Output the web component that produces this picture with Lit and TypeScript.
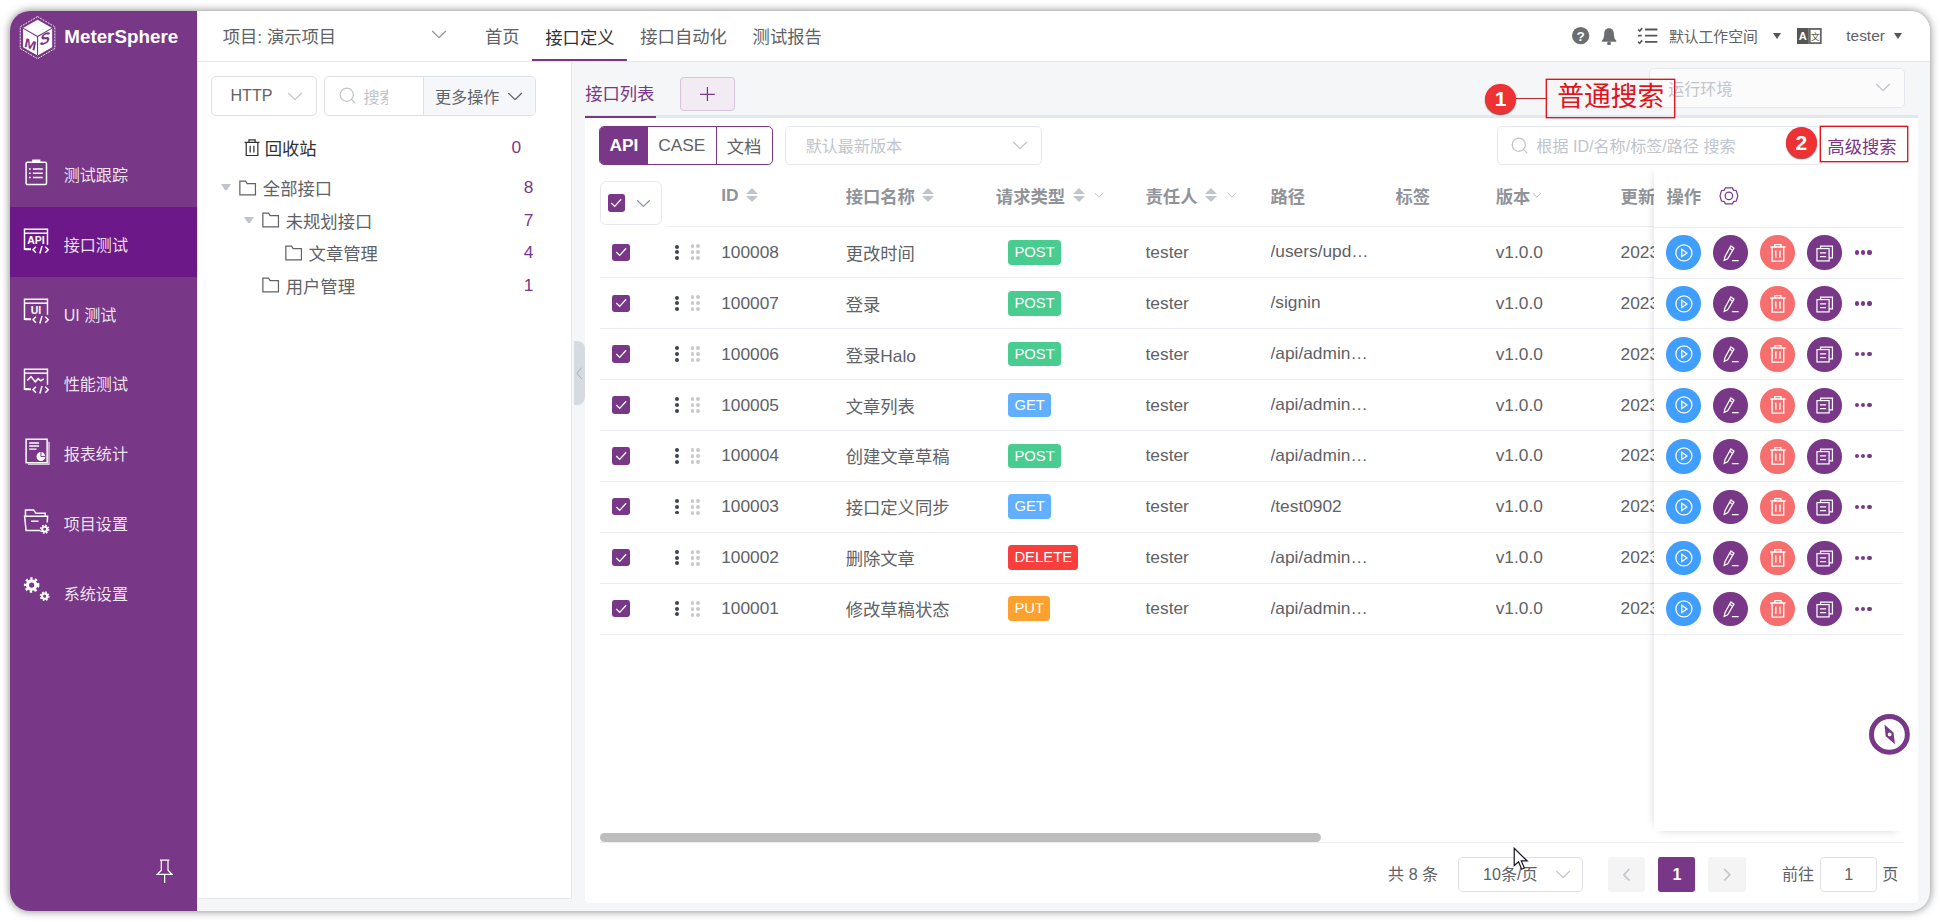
import { LitElement, html, css, svg } from "lit";
import { customElement } from "lit/decorators.js";

const chev = (c = "#c0c4cc", w = 13, h = 7) => html`<svg class="chev" width=${w} height=${h} viewBox="0 0 13 7"><path d="M1 .8l5.5 5.4L12 .8" fill="none" stroke=${c} stroke-width="1"/></svg>`;
const sideIcon = (inner: unknown) => html`<svg class="si" width="22" height="22" viewBox="0 0 22 22" fill="none" stroke="#fff" stroke-width="1.2">${inner}</svg>`;
const winBody = (label: string, x = 10.5) => svg`
  <path d="M5 17.2H1.2V1h18.6v12.5"/><path d="M1.2 4.2h18.6"/>
  <text x=${x} y="13" font-size="8.5" font-weight="700" text-anchor="middle" fill="#fff" stroke="none" font-family="Liberation Sans">${label}</text>
  <path d="M1.5 17.2h5" stroke-width="1.6"/>
  <path d="M10.5 15.2l-2.4 2.4 2.4 2.4M18 15.2l2.4 2.4-2.4 2.4M15.4 14.6l-1.8 6" stroke-width="1.2"/>`;
const gear = (cx: number, cy: number, r: number, w: number, tooth: number) => svg`<circle cx=${cx} cy=${cy} r=${r} stroke-width=${w} fill="none"/><circle cx=${cx} cy=${cy} r=${r + w * 0.7} stroke-width=${w * 0.8} stroke-dasharray="${tooth} ${tooth}" fill="none"/>`;

const NAV = [
  { t: "测试跟踪", i: sideIcon(svg`<rect x="2.5" y="2.6" width="16.5" height="18" rx="1"/><path d="M8 2.6V1h5.5v1.6z" fill="#fff"/><path d="M8 8h8M8 11.5h8M8 15h8"/><path d="M4.8 8h1.4M4.8 11.5h1.4M4.8 15h1.4"/>`) },
  { t: "接口测试", i: sideIcon(winBody("API")), a: true },
  { t: "UI 测试", i: sideIcon(winBody("UI")) },
  { t: "性能测试", i: sideIcon(svg`<path d="M5 17.2H1.2V1h18.6v12.5"/><path d="M1.2 4.2h18.6"/><path d="M3.5 10l3-3 3.4 4.2 2.4-2.6 2 1.8 2.5-1.6"/><path d="M1.5 17.2h5" stroke-width="1.6"/><path d="M10.5 15.2l-2.4 2.4 2.4 2.4M18 15.2l2.4 2.4-2.4 2.4M15.4 14.6l-1.8 6"/>`) },
  { t: "报表统计", i: sideIcon(svg`<rect x="2.5" y="1" width="17" height="19"/><path d="M4 21.3h17V3" stroke-opacity=".7"/><path d="M5 4h8M5 6.5h8M5 9h6"/><circle cx="14.5" cy="15" r="3.6" fill="#fff" stroke="none"/><path d="M14.5 15v-3.6M14.5 15h3.6" stroke="#783887" stroke-width=".8"/>`) },
  { t: "项目设置", i: sideIcon(svg`<path d="M14 19H2.5L1.3 7.5h18.6l-.3 5"/><path d="M2 7.5V2.4h6.5l2 2.6h7.5v2.5"/><path d="M6.5 11.5h6"/><circle cx="17.5" cy="18" r="2" stroke-width="1.6"/><circle cx="17.5" cy="18" r="3.3" stroke-width="1.1" stroke-dasharray="1.3 1.3"/>`) },
  { t: "系统设置", i: sideIcon(svg`${gear(7, 6.5, 3.4, 2.6, 1.9)}${gear(17.5, 15.5, 2.1, 1.7, 1.3)}`) },
];

const ROWS = [
  ["100008", "更改时间", "POST", "/users/updateTime"],
  ["100007", "登录", "POST", "/signin"],
  ["100006", "登录Halo", "POST", "/api/admin/login"],
  ["100005", "文章列表", "GET", "/api/admin/posts"],
  ["100004", "创建文章草稿", "POST", "/api/admin/posts"],
  ["100003", "接口定义同步", "GET", "/test0902"],
  ["100002", "删除文章", "DELETE", "/api/admin/posts/1"],
  ["100001", "修改草稿状态", "PUT", "/api/admin/posts/status"],
];

const TREE = [
  { t: "全部接口", n: 8, d: 0, open: true },
  { t: "未规划接口", n: 7, d: 1, open: true },
  { t: "文章管理", n: 4, d: 2 },
  { t: "用户管理", n: 1, d: 1 },
];

const TAG: Record<string, string> = { POST: "post", GET: "get", DELETE: "del", PUT: "put" };

const sort = html`<span class="sort"><i class="up"></i><i class="dn"></i></span>`;
const check = html`<span class="cb"><svg width="10" height="8" viewBox="0 0 10 8"><path d="M1 4l2.8 2.8L9 1" fill="none" stroke="#fff" stroke-width="1"/></svg></span>`;
const folder = html`<svg class="fd" width="14" height="13" viewBox="0 0 14 13"><path d="M.7 1h4.6l1.3 2h6.7v9H.7z" fill="none" stroke="#606266" stroke-width="1"/></svg>`;
const search = html`<svg width="14" height="14" viewBox="0 0 14 14"><circle cx="6.3" cy="6.3" r="5.3" fill="none" stroke="#c0c4cc" stroke-width="1"/><path d="M10.2 10.2l3 3" stroke="#c0c4cc" stroke-width="1"/></svg>`;

@customElement("app-root")
export class AppRoot extends LitElement {
  static styles = css`
    :host { display: block; }
    * { box-sizing: border-box; }
    .app { zoom: 1.2372; width: 1568px; height: 745px; padding: 9px 8px 0; overflow: hidden; background: #fff;
      font-family: "Liberation Sans", "Noto Sans CJK SC", sans-serif; font-size: 14px; color: #606266; }
    .win { position: relative; width: 1552px; height: 727px; border-radius: 16px; overflow: hidden; display: flex;
      background: #f5f6f7; box-shadow: 0 0 7px rgba(0,0,0,.5); }
    svg { display: block; flex: none; }

    .side { width: 151px; flex: none; background: #783887; display: flex; flex-direction: column; color: #fff; }
    .logo { height: 102px; padding: 4px 0 0 7.5px; display: flex; align-items: flex-start; gap: 6.5px; }
    .logo b { font-size: 15.2px; line-height: 34px; }
    .item { height: 56.4px; display: flex; align-items: center; padding-left: 11px; gap: 10.5px; font-size: 13px; color: rgba(255,255,255,.88); }
    .item.on { background: #6c1889; }
    .item span { padding-top: 3px; }
    .pin { margin: auto 19px 22px auto; }

    .right { flex: 1; min-width: 0; display: flex; flex-direction: column; }
    .top { height: 41px; flex: none; background: #fff; border-bottom: 1px solid #e6e6e6; display: flex; align-items: stretch; padding-left: 21px; }
    .proj { width: 201.6px; display: flex; align-items: center; justify-content: space-between; padding: 0 20px 0 0; }
    .proj .chev { margin-top: -2px; }
    .tab { padding: 0 10.4px; display: flex; align-items: center; }
    .tab.on { color: #303133; border-bottom: 2px solid #783887; padding-top: 2px; }
    .tools { margin-left: auto; padding-right: 23px; display: flex; align-items: center; font-size: 12px; }
    .caret { width: 0; height: 0; border: 4px solid transparent; border-top: 5px solid #555; border-bottom: 0; }
    .ml7 { margin-left: 7px; }
    .ml9 { margin-left: 9px; }
    .ml12 { margin-left: 12px; }
    .ml13 { margin-left: 13px; }
    .ml16 { margin-left: 16px; }
    .ml20 { margin-left: 20px; font-size: 12.5px; }

    .body { flex: 1; min-height: 0; display: flex; }
    .panel { width: 302px; margin: 0 0 9px 1px; flex: none; background: #fff; border-right: 1px solid #e4e7ed; border-bottom: 1px solid #e8e8e8; padding: 11.5px 0 0 10.5px; }
    .filters { display: flex; gap: 6px; }
    .sel { height: 32px; border: 1px solid #dcdfe6; border-radius: 4px; display: flex; align-items: center; justify-content: space-between; background: #fff; }
    .http { width: 85.5px; padding: 0 10px 0 15px; font-size: 13px; }
    .group { width: 171px; height: 32px; border: 1px solid #dcdfe6; border-radius: 4px; display: flex; overflow: hidden; }
    .group .q { width: 79px; display: flex; align-items: center; padding-left: 11px; gap: 6px; color: #c0c4cc; font-size: 13px; overflow: hidden; white-space: nowrap; }
    .group .q em { font-style: normal; width: 20px; overflow: hidden; display: block; }
    .group .more { flex: 1; background: #f5f7fa; border-left: 1px solid #dcdfe6; display: flex; align-items: center; padding-left: 9px; gap: 6px; font-size: 13px; }
    .bin { margin-top: 12px; height: 28px; display: flex; align-items: center; padding-left: 26.5px; gap: 4px; color: #303133; }
    .bin i, .node i { font-style: normal; color: #783887; margin-left: auto; }
    .bin i { margin-right: 40px; }
    .tree { margin-top: 5px; }
    .node { height: 26.3px; display: flex; align-items: center; position: relative; }
    .node i { margin-right: 30px; }
    .tri { width: 8px; height: 5px; flex: none; margin-right: 6.5px; border-style: solid; border-width: 5px 4px 0; border-color: #c0c4cc transparent transparent; }
    .tri.none { border-color: transparent; }
    .node .fd { margin-right: 5px; }

    .gut { width: 11px; flex: none; display: flex; padding: 226px 0 0 2px; }
    .gut div { width: 8.5px; height: 51px; background: #d5dbe0; border-radius: 0 6px 6px 0; display: flex; align-items: center; justify-content: center; }

    .main { flex: 1; min-width: 0; display: flex; flex-direction: column; padding-right: 10px; padding-bottom: 6px; }
    .tabs { height: 45px; flex: none; display: flex; position: relative; }
    .tabs::after { content: ""; position: absolute; left: 0; right: 0; bottom: 0; height: 2px; background: #e4e7ed; }
    .lt { width: 57px; height: 45px; color: #783887; border-bottom: 2px solid #783887; display: flex; align-items: center; padding-top: 6px; position: relative; z-index: 1; }
    .add { width: 44px; height: 27px; margin: 12.5px 0 0 20px; background: #f2ebf3; border: 1px solid #d7c3db; border-radius: 3px; display: flex; align-items: center; justify-content: center; }
    .env { width: 206.5px; height: 32px; margin: 5px 10.5px 0 auto; padding: 0 10px 0 14.5px; color: #c0c4cc; font-size: 13px; border-color: #e4e7ed; background: #fbfbfc; }

    .card { flex: 1; min-height: 0; background: #fff; border-radius: 3px; position: relative; display: flex; flex-direction: column; }
    .bar { display: flex; align-items: center; height: 32px; margin: 6.5px 12px 0 11px; flex: none; }
    .sw { display: flex; height: 32px; width: 140.5px; border: 1px solid #783887; border-radius: 4px; overflow: hidden; }
    .sw span { display: flex; align-items: center; justify-content: center; }
    .sw .a { width: 39px; background: #783887; color: #fff; font-weight: 700; }
    .sw .b { width: 55.5px; border-right: 1px solid #783887; }
    .sw .c { flex: 1; }
    .ver { width: 208px; margin-left: 10px; padding: 0 11px 0 16px; color: #c0c4cc; font-size: 13px; border-color: #e4e7ed; }
    .find { margin-left: auto; width: 262px; height: 32px; border: 1px solid #e4e7ed; border-radius: 4px; display: flex; align-items: center; gap: 6.5px; padding-left: 10.5px; color: #c0c4cc; font-size: 13px; white-space: nowrap; }
    .adv { margin-left: 5px; width: 61px; color: #783887; }

    .table { margin: 9px 12px 0; flex: 1; min-height: 0; overflow: hidden; }
    .rw { display: grid; grid-template-columns: 54px 44px 100.6px 121.4px 121px 101px 101px 81px 101px 228px; height: 41.15px; }
    .rw > div { display: flex; align-items: center; border-bottom: 1px solid #ebeef5; white-space: nowrap; overflow: hidden; }
    .head { height: 41.3px; color: #909399; font-weight: 700; }
    .head > div { padding-bottom: 10px; }
    .head > div:first-child { border-bottom: 0; padding: 2px 0 0; overflow: visible; }
    .all { width: 50px; height: 35px; border: 1px solid #e4e7ed; border-radius: 5px; display: flex; align-items: center; padding-left: 5.5px; gap: 9px; }
    .cb { width: 14px; height: 14px; border-radius: 2px; background: #783887; display: flex; align-items: center; justify-content: center; flex: none; }
    .rw .c0 { padding-left: 10px; }
    .sort { display: inline-flex; flex-direction: column; gap: 2px; margin-left: 6px; }
    .sort i { display: block; width: 0; height: 0; border-left: 5px solid transparent; border-right: 5px solid transparent; }
    .sort .up { border-bottom: 5.5px solid #c0c4cc; }
    .sort .dn { border-top: 5.5px solid #c0c4cc; }
    .flt { margin-left: 8px; }
    .flv { margin-left: 1px; }
    .drag { display: flex; align-items: center; padding-left: 6.5px; gap: 9.5px; }
    .vd { width: 3.2px; display: flex; flex-direction: column; gap: 1.4px; }
    .vd b { width: 3.2px; height: 3.2px; border-radius: 50%; background: #3d4450; display: block; }
    .gr { display: grid; grid-template-columns: 3.2px 3.2px; gap: 1.6px 1.2px; }
    .gr b { width: 3.2px; height: 3.2px; border-radius: 50%; background: #c9c9c9; display: block; }
    .t { margin-left: 10px; height: 20px; padding: 0 5px; line-height: 20px; font-size: 12px; color: #fff; border-radius: 3px; }
    .post { background: #49cc90; }
    .get { background: #61affe; }
    .del { background: #f93e3e; }
    .put { background: #fca130; }
    .path { display: block !important; line-height: 40px; }
    .path span { display: block; width: 81px; overflow: hidden; text-overflow: ellipsis; }

    .fixed { position: absolute; left: 864px; top: 40px; width: 201px; height: 537px; background: #fff; box-shadow: -5px 0 7px -5px rgba(0,0,0,.14), 0 5px 7px -5px rgba(0,0,0,.14); }
    .fh { height: 49px; padding: 0 0 0 10px; display: flex; align-items: center; gap: 14.5px; color: #909399; font-weight: 700; padding-bottom: 2px; border-bottom: 1px solid #ebeef5; }
    .fr { height: 41.15px; padding-left: 10px; display: flex; align-items: center; gap: 10px; border-bottom: 1px solid #ebeef5; }
    .ic { width: 28px; height: 28px; border-radius: 50%; display: flex; align-items: center; justify-content: center; flex: none; }
    .ic.b { background: #409eff; }
    .ic.p { background: #783887; }
    .ic.r { background: #f76e6e; }
    .mo { display: flex; gap: 1.6px; margin-left: .5px; }
    .mo b { width: 3.4px; height: 3.4px; background: #783887; border-radius: 50%; display: block; }

    .thumb { flex: none; height: 7.5px; width: 583px; margin-left: 12px; border-radius: 4px; background: #bdbdbd; }
    .pager { flex: none; height: 49.5px; margin: 0 12px; border-top: 1px solid #ebeef5; display: flex; align-items: flex-start; padding-top: 11.5px; font-size: 13px; line-height: 28px; }
    .pager .tot { margin-left: 637px; }
    .size { width: 101px; height: 28px; margin-left: 16px; padding: 0 9px 0 19.5px; border-color: #dcdfe6; font-size: 13px; }
    .pg { width: 30px; height: 28px; border-radius: 2px; background: #f4f4f5; display: flex; align-items: center; justify-content: center; margin-left: 10.5px; }
    .pg.first { margin-left: 20.5px; }
    .pg.cur { background: #783887; color: #fff; font-weight: 700; }
    .go { margin-left: 29.5px; }
    .num { width: 46px; height: 28px; margin: 0 4px 0 5px; border: 1px solid #dcdfe6; border-radius: 3px; text-align: center; line-height: 26px; }

    .note { position: absolute; border: 1px solid #e0141c; color: #e0141c; display: flex; align-items: center; justify-content: center; white-space: nowrap; background: transparent; }
    .n1 { left: 1242px; top: 55px; width: 104px; height: 31px; font-size: 21.6px; line-height: 1; padding-bottom: 2px; box-shadow: 0 0 0 .3px #e0141c; }
    .n2 { left: 1463px; top: 93px; width: 71px; height: 29px; box-shadow: 0 0 0 .3px #e0141c; }
    .bd { position: absolute; width: 25px; height: 25px; border-radius: 50%; background: #ee3233; color: #fff; font-size: 17px; font-weight: 700; display: flex; align-items: center; justify-content: center; box-shadow: 0 1px 1px rgba(90,0,0,.7); }
    .b1 { left: 1192.5px; top: 58.5px; }
    .b2 { left: 1435.5px; top: 94px; }
    .ln { position: absolute; left: 1217px; top: 70px; width: 25px; height: 1.4px; background: #b8262a; }
    .compass { position: absolute; left: 1503px; top: 568.5px; }
    .cursor { position: absolute; left: 1215px; top: 676px; }
  `;

  private row(r: string[]) {
    return html`<div class="rw">
      <div class="c0">${check}</div>
      <div class="drag"><span class="vd"><b></b><b></b><b></b></span><span class="gr"><b></b><b></b><b></b><b></b><b></b><b></b></span></div>
      <div>${r[0]}</div><div>${r[1]}</div>
      <div><span class="t ${TAG[r[2]]}">${r[2]}</span></div>
      <div>tester</div>
      <div class="path"><span>${r[3]}</span></div>
      <div></div><div>v1.0.0</div><div>2023-09-04 15:30:21</div>
    </div>`;
  }

  private actions() {
    return html`<div class="fr">
      <span class="ic b"><svg width="16" height="16" viewBox="0 0 16 16" fill="none" stroke="#fff" stroke-width="1"><circle cx="8" cy="8" r="6.5"/><path d="M6.3 5l4.2 3-4.2 3z"/></svg></span>
      <span class="ic p"><svg width="16" height="16" viewBox="0 0 16 16" fill="none" stroke="#fff" stroke-width="1"><path d="M3.2 11L2.6 14l2.800-1.300L10.500 4.200 8 2.400z"/><path d="M6.800 4l2.500 1.800M8.800 14.300h5.500"/></svg></span>
      <span class="ic r"><svg width="16" height="16" viewBox="0 0 16 16" fill="none" stroke="#fff" stroke-width="1.1"><path d="M1.800 3.200h12.400M5.500 3V1.300h5V3M3.300 3.200V14.700h9.400V3.200M6.300 6v6M9.700 6v6"/></svg></span>
      <span class="ic p"><svg width="16" height="16" viewBox="0 0 16 16" fill="none" stroke="#fff" stroke-width="1"><rect x="1.600" y="4.500" width="9.800" height="10"/><path d="M4.500 4.500V2.500h9.600v9.500h-2.700M4 8h5M4 11h5"/></svg></span>
      <span class="mo"><b></b><b></b><b></b></span>
    </div>`;
  }

  render() {
    return html`<div class="app"><div class="win">
      <aside class="side">
        <div class="logo">
          <svg width="30" height="35" viewBox="0 0 30 35">
            <path d="M15 .5l14 8.200v17.600L15 34.500 1 26.300V8.700z" fill="none" stroke="#fff" stroke-width=".7" stroke-dasharray="1.600 .8"/>
            <path d="M15 3l11.800 6.800v15.400L15 32 3.200 25.200V9.800z" fill="#fff"/>
            <path d="M3.200 9.800L15 16.600l11.800-6.800M15 16.600V32" fill="none" stroke="#783887" stroke-width=".9"/>
            <text x="9" y="27" font-size="11" font-weight="700" font-style="italic" text-anchor="middle" fill="#783887" font-family="Liberation Sans" transform="skewY(22) translate(0 -4)">M</text>
            <text x="21" y="16" font-size="12.500" font-weight="700" font-style="italic" text-anchor="middle" fill="#783887" font-family="Liberation Sans" transform="skewY(-22) translate(0 15)">S</text>
          </svg>
          <b>MeterSphere</b>
        </div>
        ${NAV.map((n) => html`<div class="item ${n.a ? "on" : ""}">${n.i}<span>${n.t}</span></div>`)}
        <svg class="pin" width="14" height="20" viewBox="0 0 14 20" fill="none" stroke="#fff" stroke-width="1"><path d="M3.200 1h7.600M4.300 1v8L1 12.500h12L9.700 9V1M7 12.500V19.500"/></svg>
      </aside>
      <div class="right">
        <header class="top">
          <div class="proj"><span>项目: 演示项目</span>${chev("#909399")}</div>
          <div class="tab">首页</div><div class="tab on">接口定义</div><div class="tab">接口自动化</div><div class="tab">测试报告</div>
          <div class="tools">
            <svg width="14" height="14" viewBox="0 0 14 14"><circle cx="7" cy="7" r="7" fill="#6b6d70"/><text x="7" y="11" font-size="11" font-weight="700" text-anchor="middle" fill="#fff" font-family="Liberation Sans">?</text></svg>
            <svg class="ml9" width="13" height="15" viewBox="0 0 13 15"><path d="M6.500 1C3.800 1 2.600 3 2.600 5.500c0 3-.7 4.400-2 5.600v.9h11.800v-.9c-1.300-1.200-2-2.600-2-5.600C10.400 3 9.200 1 6.500 1z" fill="#6b6d70"/><circle cx="6.500" cy="13.300" r="1.500" fill="#6b6d70"/></svg>
            <svg class="ml16" width="17" height="14" viewBox="0 0 17 14" fill="none" stroke="#555" stroke-width="1.500"><path d="M6.500 2h10M6.500 7h10M6.500 12h10"/><path d="M.8 2l1.400 1.300L4.200.8M.8 7h3M.8 12l1.400 1 2-2.200" stroke-width="1.300"/></svg>
            <span class="ml9">默认工作空间</span><span class="caret ml12"></span>
            <svg class="ml13" width="20" height="13" viewBox="0 0 20 13"><rect width="9.500" height="13" fill="#555"/><rect x="9.500" width="10.500" height="13" fill="#666"/><rect x="11" y="1.500" width="7.500" height="10" fill="#fff"/><text x="4.700" y="10" font-size="9" font-weight="700" text-anchor="middle" fill="#fff" font-family="Liberation Sans">A</text><text x="14.800" y="9.800" font-size="7" text-anchor="middle" fill="#555" font-family="Noto Sans CJK SC">文</text></svg>
            <span class="ml20">tester</span><span class="caret ml7"></span>
          </div>
        </header>
        <div class="body">
          <section class="panel">
            <div class="filters">
              <div class="sel http"><span>HTTP</span>${chev()}</div>
              <div class="group">
                <div class="q">${search}<em>搜索</em></div>
                <div class="more"><span>更多操作</span>${chev("#606266")}</div>
              </div>
            </div>
            <div class="bin">
              <svg width="13" height="14" viewBox="0 0 13 14" fill="none" stroke="#303133" stroke-width="1"><path d="M.5 2.800h12M4 2.800V.8h5v2M1.800 2.800v10.700h9.400V2.800M5 5.500v5.500M8 5.500v5.500"/></svg>
              <span>回收站</span><i>0</i>
            </div>
            <div class="tree">
              ${TREE.map((n) => html`<div class="node" style="padding-left:${8.5 + n.d * 18.5}px">
                <span class="tri ${n.open ? "" : "none"}"></span>${folder}<span>${n.t}</span><i>${n.n}</i>
              </div>`)}
            </div>
          </section>
          <div class="gut"><div><svg width="5" height="10" viewBox="0 0 5 10"><path d="M4.500 .5L.7 5l3.800 4.500" fill="none" stroke="#a8adb3" stroke-width=".8"/></svg></div></div>
          <main class="main">
            <div class="tabs">
              <div class="lt">接口列表</div>
              <div class="add"><svg width="12" height="12" viewBox="0 0 12 12"><path d="M6 0v12M0 6h12" stroke="#783887" stroke-width="1"/></svg></div>
              <div class="sel env"><span>运行环境</span>${chev()}</div>
            </div>
            <div class="card">
              <div class="bar">
                <div class="sw"><span class="a">API</span><span class="b">CASE</span><span class="c">文档</span></div>
                <div class="sel ver"><span>默认最新版本</span>${chev()}</div>
                <div class="find">${search}<span>根据 ID/名称/标签/路径 搜索</span></div>
                <div class="adv">高级搜索</div>
              </div>
              <div class="table">
                <div class="rw head">
                  <div><span class="all">${check}${chev("#8a93a6", 12, 7)}</span></div><div></div>
                  <div>ID${sort}</div><div>接口名称${sort}</div>
                  <div>请求类型${sort}<span class="flt">${chev("#a8adb3", 8, 5)}</span></div>
                  <div>责任人${sort}<span class="flt">${chev("#a8adb3", 8, 5)}</span></div>
                  <div>路径</div><div>标签</div>
                  <div>版本<span class="flv">${chev("#a8adb3", 8, 5)}</span></div>
                  <div>更新时间</div>
                </div>
                ${ROWS.map((r) => this.row(r))}
              </div>
              <div class="thumb"></div>
              <div class="pager">
                <span class="tot">共 8 条</span>
                <div class="sel size"><span>10条/页</span>${chev()}</div>
                <div class="pg first"><svg width="7" height="11" viewBox="0 0 7 11"><path d="M6 .8L1.500 5.500 6 10.200" fill="none" stroke="#c0c4cc" stroke-width="1.300"/></svg></div>
                <div class="pg cur">1</div>
                <div class="pg"><svg width="7" height="11" viewBox="0 0 7 11"><path d="M1 .8l4.500 4.700L1 10.200" fill="none" stroke="#c0c4cc" stroke-width="1.300"/></svg></div>
                <span class="go">前往</span><div class="num">1</div><span>页</span>
              </div>
              <div class="fixed">
                <div class="fh"><span>操作</span>
                  <svg width="16" height="16" viewBox="0 0 16 16" fill="none" stroke="#783887" stroke-width="1"><path d="M5.200 1.500h5.600l1 1.900 2.200.4 1.200 4.200-1.200 4.200-2.200.4-1 1.900H5.200l-1-1.900-2.200-.4L.8 8 2 3.800l2.200-.4z"/><circle cx="8" cy="8" r="3"/></svg>
                </div>
                ${ROWS.map(() => this.actions())}
              </div>
            </div>
          </main>
        </div>
      </div>

      <span class="ln"></span>
      <div class="note n1">普通搜索</div>
      <div class="note n2"></div>
      <span class="bd b1">1</span>
      <span class="bd b2">2</span>
      <svg class="compass" width="33" height="33" viewBox="0 0 33 33"><circle cx="16.500" cy="16.500" r="14.500" fill="#fff" stroke="#783887" stroke-width="4"/><path d="M12.500 8.500L19.800 15l1.200 9.500L13.500 18z" fill="#783887"/><circle cx="16.700" cy="16.500" r="1.500" fill="#fff"/></svg>
      <svg class="cursor" width="13" height="19" viewBox="0 0 13 19"><path d="M1 1v14l3.500-3 2.500 6 2.200-1-2.500-5.700H11.500z" fill="#fff" stroke="#1a1a24" stroke-width="1"/></svg>
    </div></div>`;
  }
}
